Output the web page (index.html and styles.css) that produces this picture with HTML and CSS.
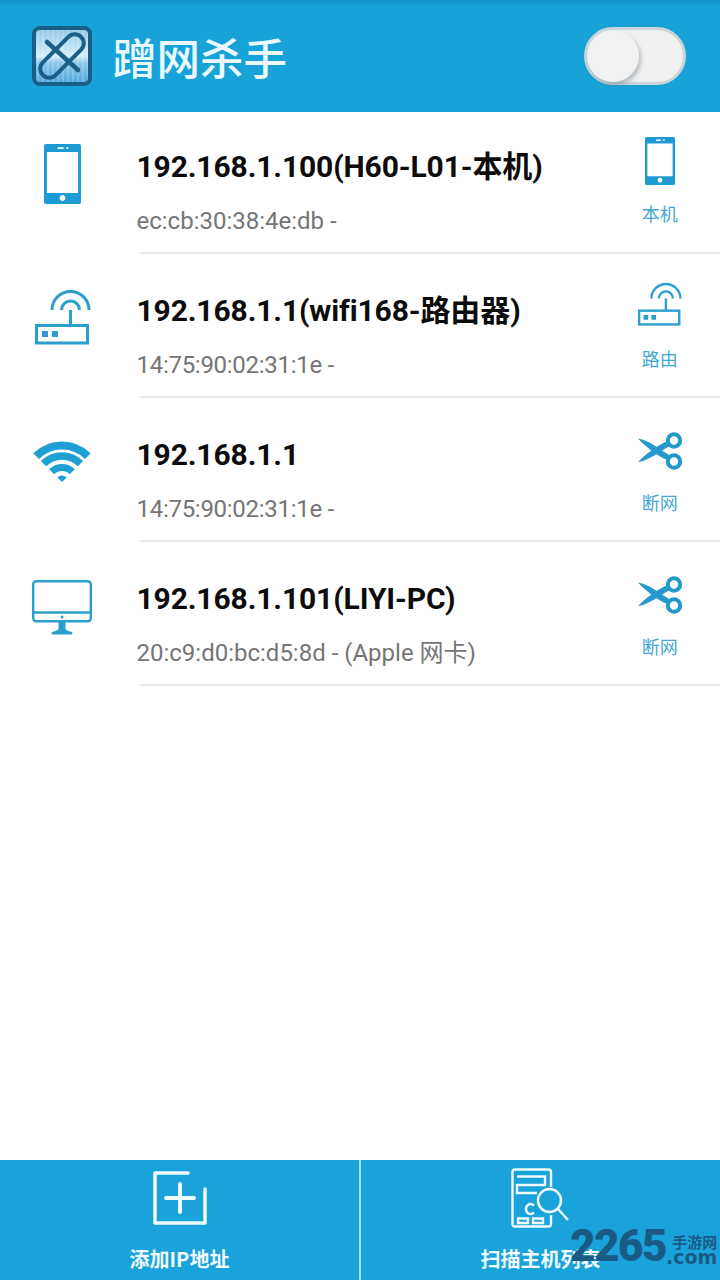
FILE: index.html
```html
<!DOCTYPE html>
<html lang="zh">
<head>
<meta charset="utf-8">
<title>蹭网杀手</title>
<link rel="stylesheet" href="styles.css">
</head>
<body>
<svg class="defs" width="0" height="0">
  <defs>
    <symbol id="phone" viewBox="0 0 38 60" preserveAspectRatio="none">
      <path fill="currentColor" fill-rule="evenodd" d="M2 0H36a2 2 0 0 1 2 2V58a2 2 0 0 1-2 2H2a2 2 0 0 1-2-2V2a2 2 0 0 1 2-2ZM3 8V49H35V8ZM14 3.200V5H20V3.200ZM23 3.200V5H25V3.200ZM19 51a3 3 0 1 0 .01 0Z"/>
    </symbol>
    <symbol id="router" viewBox="0 0 56 56" preserveAspectRatio="none">
      <g fill="none" stroke="currentColor">
        <path stroke-width="3" d="M17 21A18.500 18.500 0 0 1 54 21"/>
        <path stroke-width="3" d="M26.500 21A9 9 0 0 1 44.500 21"/>
        <path stroke-width="3" d="M35.500 21V36"/>
        <rect x="1.500" y="36.500" width="51" height="17.500" stroke-width="3"/>
      </g>
      <path fill="currentColor" d="M7 42H13V48H7ZM17 42H23V48H17Z"/>
    </symbol>
    <symbol id="scissors" viewBox="0 0 46 38">
      <g fill="none" stroke="currentColor" stroke-width="4">
        <circle cx="37" cy="8.500" r="6.200"/>
        <circle cx="37" cy="29.500" r="6.200"/>
      </g>
      <path fill="currentColor" d="M1 6.500C12 8 22 17 33 23.500L31 28.500C20 24 8 14 1 6.500Z"/>
      <path fill="currentColor" d="M1 30C12 28.500 22 20 33 14L31 9C20 13 8 23 1 30Z"/>
    </symbol>
  </defs>
</svg>
<div class="app">
  <header class="top">
    <div class="brand">
      <svg class="logo" viewBox="0 0 60 60">
        <defs>
          <linearGradient id="lg" x1="0" y1="0" x2="0" y2="1">
            <stop offset="0" stop-color="#8fc4e6"/>
            <stop offset=".3" stop-color="#b9dff2"/>
            <stop offset=".5" stop-color="#d6eef8"/>
            <stop offset=".62" stop-color="#8cc8ea"/>
            <stop offset="1" stop-color="#4fa6dd"/>
          </linearGradient>
          <pattern id="st" width="5" height="60" patternUnits="userSpaceOnUse">
            <rect width="2" height="60" fill="#fff" opacity=".16"/>
          </pattern>
        </defs>
        <rect x="2" y="2" width="56" height="56" rx="6" fill="url(#lg)"/>
        <rect x="2" y="2" width="56" height="56" rx="6" fill="url(#st)"/>
        <rect x="2" y="2" width="56" height="56" rx="6" fill="none" stroke="#1a5f88" stroke-width="4"/>
        <rect x="3" y="21" width="54" height="18" rx="9" fill="none" stroke="#1a5f88" stroke-width="4" transform="rotate(-45 30 30)"/>
        <path d="M15 16L46 44" stroke="#1a5f88" stroke-width="4.500" stroke-linecap="round"/>
      </svg>
      <h1 class="title">蹭网杀手</h1>
    </div>
    <div class="toggle"><span class="knob"></span></div>
  </header>

  <main class="list">
    <section class="row">
      <div class="lead"><svg class="ic-phone"><use href="#phone"/></svg></div>
      <div class="info">
        <div class="ip">192.168.1.100(H60-L01-本机)</div>
        <div class="mac">ec:cb:30:38:4e:db -</div>
      </div>
      <div class="act"><svg class="ic-phone-sm"><use href="#phone"/></svg><span class="act-label">本机</span></div>
    </section>
    <section class="row">
      <div class="lead"><svg class="ic-router"><use href="#router"/></svg></div>
      <div class="info">
        <div class="ip">192.168.1.1(wifi168-路由器)</div>
        <div class="mac mac-tight">14:75:90:02:31:1e -</div>
      </div>
      <div class="act"><svg class="ic-router-sm"><use href="#router"/></svg><span class="act-label">路由</span></div>
    </section>
    <section class="row">
      <div class="lead">
        <svg class="ic-wifi" viewBox="0 0 58 42">
          <g fill="none" stroke="currentColor">
            <path stroke-width="8" d="M3.200 15.200A36.500 36.500 0 0 1 54.800 15.200"/>
            <path stroke-width="7.500" d="M10.600 22.600A26 26 0 0 1 47.400 22.600"/>
            <path stroke-width="7" d="M18.700 30.700A14.500 14.500 0 0 1 39.300 30.700"/>
          </g>
          <path fill="currentColor" d="M29 41L24.400 36.400A6.500 6.500 0 0 1 33.600 36.400Z"/>
        </svg>
      </div>
      <div class="info">
        <div class="ip">192.168.1.1</div>
        <div class="mac mac-tight">14:75:90:02:31:1e -</div>
      </div>
      <div class="act"><svg class="ic-scissors"><use href="#scissors"/></svg><span class="act-label">断网</span></div>
    </section>
    <section class="row">
      <div class="lead">
        <svg class="ic-pc" viewBox="0 0 60 56">
          <rect x="1.200" y="1.200" width="57.600" height="40" rx="3" fill="none" stroke="currentColor" stroke-width="2.400"/>
          <path d="M1 32.500H59" stroke="currentColor" stroke-width="2.400"/>
          <circle cx="30" cy="37" r="1.500" fill="currentColor"/>
          <path fill="currentColor" d="M26.500 42H33.500V49C35 51 38 51 40 52C41 53.500 40.500 54.500 39 54.500H21C19.500 54.500 19 53.500 20 52C22 51 25 51 26.500 49Z"/>
        </svg>
      </div>
      <div class="info">
        <div class="ip">192.168.1.101(LIYI-PC)</div>
        <div class="mac">20:c9:d0:bc:d5:8d - (Apple 网卡)</div>
      </div>
      <div class="act"><svg class="ic-scissors"><use href="#scissors"/></svg><span class="act-label">断网</span></div>
    </section>
  </main>

  <footer class="bottom">
    <div class="tab tab-add">
      <svg class="ic-add" viewBox="0 0 54 54">
        <path d="M35 2H2V52H52V18" fill="none" stroke="currentColor" stroke-width="3.500" stroke-linecap="round" stroke-linejoin="round"/>
        <path d="M13 27H41M27 13V41" fill="none" stroke="currentColor" stroke-width="4" stroke-linecap="round"/>
      </svg>
      <span class="tab-label">添加IP地址</span>
    </div>
    <div class="tab tab-scan">
      <svg class="ic-scan" viewBox="0 0 58 60">
        <g fill="none" stroke="currentColor" stroke-width="2.400">
          <path d="M40 19V4C40 2.500 39 1.500 37.500 1.500H4C2.500 1.500 1.500 2.500 1.500 4V56C1.500 57.500 2.500 58.500 4 58.500H37.500C39 58.500 40 57.500 40 56V47"/>
          <path d="M6 8.500H34V17H6V25H26"/>
          <path d="M23 37.500C19 34 15 37 15 41C15 45 19 48 23 44.500"/>
          <circle cx="38.500" cy="32.500" r="11.500"/>
          <path d="M47 41L57 52"/>
          <path d="M7 50.500H17V55H7ZM22 50.500H32V55H22Z"/>
        </g>
      </svg>
      <span class="tab-label">扫描主机列表</span>
    </div>
    <div class="mark">
      <span class="mark-num">2265</span>
      <span class="mark-side"><span class="mark-cn">手游网</span><span class="mark-com">.com</span></span>
    </div>
  </footer>
</div>
</body>
</html>
```
FILE: styles.css
```css
* { box-sizing: border-box; margin: 0; padding: 0; }
html, body { width: 720px; height: 1280px; overflow: hidden; background: #fff; }
body { font-family: Roboto, "Noto Sans CJK SC", sans-serif; }
.defs { position: absolute; }
.app { width: 720px; height: 1280px; display: flex; flex-direction: column; }

.top {
  height: 112px;
  flex: none;
  background: linear-gradient(#1593c6 0, #17a2d8 6px);
  display: flex;
  align-items: center;
  justify-content: space-between;
  padding: 0 34px 1px 32px;
}
.brand { display: flex; align-items: center; gap: 21px; }
.logo { width: 60px; height: 60px; display: block; }
.title { font-size: 43.500px; font-weight: 500; color: #e9f9fe; line-height: 60px; padding-top: 5px; height: 60px; }
.toggle {
  width: 102px;
  height: 58px;
  border-radius: 29px;
  background: #f0f0f0;
  border: 3px solid #c8d6dc;
  position: relative;
}
.knob {
  position: absolute;
  left: 0;
  top: 0;
  width: 52px;
  height: 52px;
  border-radius: 50%;
  background: #f1f1f1;
  box-shadow: 2px 3px 4px rgba(90, 110, 120, .4);
}

.list { flex: 1; display: flex; flex-direction: column; color: #1ea0d5; }
.row { height: 144px; flex: none; display: flex; position: relative; }
.row::after {
  content: "";
  position: absolute;
  left: 140px;
  right: 0;
  bottom: 2px;
  height: 2px;
  background: #e9e9e9;
}
.lead { width: 136.500px; flex: none; padding-left: 32px; height: 100%; }
.lead svg { display: block; width: 60px; }
.info { flex: 1; min-width: 0; padding-top: 34px; }
.ip { font-size: 30px; font-weight: 700; line-height: 42px; color: #0c0c0c; white-space: nowrap; letter-spacing: -.12px; }
.mac { font-size: 24px; line-height: 32px; margin-top: 17px; color: #757575; white-space: nowrap; }
.mac-tight { letter-spacing: -.28px; }
.act { width: 120.500px; flex: none; display: flex; flex-direction: column; align-items: center; padding-top: 25px; height: 100%; }
.act svg { display: block; flex: none; }
.act-label { font-size: 18px; line-height: 22px; color: #45a7d2; font-family: "Noto Sans CJK SC", sans-serif; }

.ic-phone { height: 60px; margin-top: 32px; color: #1e9bd3; }
.lead .ic-phone { width: 37px; margin-left: 12px; }
.ic-phone-sm { width: 30px; height: 48px; margin-bottom: 17px; color: #1e9bd3; }
.ic-router { height: 56px; margin-top: 33px; color: #2a9fcd; }
.lead .ic-router { width: 56px; margin-left: 3px; }
.ic-router-sm { width: 44px; height: 44px; margin-top: 1px; margin-bottom: 21px; color: #2a9fcd; }
.lead .ic-wifi { width: 58px; height: 42px; margin-top: 41px; margin-left: 1px; color: #1ea0d5; }
.ic-scissors { width: 46px; height: 38px; margin-top: 7px; margin-bottom: 21px; color: #2499cc; }
.lead .ic-pc { width: 60px; height: 56px; margin-top: 36px; color: #2a9fcd; }

.bottom {
  height: 120px;
  flex: none;
  background: #1aa3da;
  display: grid;
  grid-template-columns: 361px 359px;
  position: relative;
}
.tab { display: flex; flex-direction: column; align-items: center; color: #f0fbff; height: 120px; }
.tab-add { border-right: 2px solid #9edcf3; }
.ic-add { width: 54px; height: 54px; margin-top: 11px; }
.ic-scan { width: 58px; height: 60px; margin-top: 8px; margin-right: 1px; }
.tab-label { font-size: 20px; font-weight: 700; line-height: 28px; font-family: "Noto Sans CJK SC", sans-serif; }
.tab-add .tab-label { margin-top: 20px; }
.tab-scan .tab-label { margin-top: 17px; }

.mark {
  position: absolute;
  left: 570px;
  top: 64px;
  display: flex;
  align-items: flex-start;
  color: #1a5b86;
}
.mark-num { font-family: Roboto, sans-serif; font-weight: 900; font-size: 44px; line-height: 44px; letter-spacing: -1.500px; }
.mark-side { display: flex; flex-direction: column; align-items: flex-end; padding-top: 9px; }
.mark-cn { font-family: "Noto Sans CJK SC", sans-serif; font-weight: 700; font-size: 15px; line-height: 17px; white-space: nowrap; }
.mark-com { font-family: "DejaVu Sans", sans-serif; font-weight: 700; font-size: 19px; line-height: 14px; white-space: nowrap; }
```
